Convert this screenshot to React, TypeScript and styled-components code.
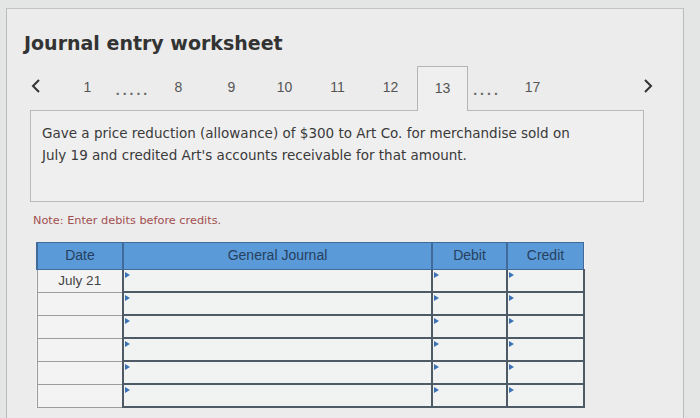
import React from 'react';
import styled, { createGlobalStyle } from 'styled-components';

const GlobalStyle = createGlobalStyle`
  html, body {
    margin: 0;
    padding: 0;
    background: #e4e5e5;
  }
  body {
    width: 700px;
    height: 418px;
    overflow: hidden;
  }
`;

const Page = styled.div`
  margin: 8px 0 0 6px;
  width: 678px;
  height: 410px;
  box-sizing: border-box;
  background: #ececec;
  border-top: 1px solid #c2c3c3;
  border-left: 1px solid #b9baba;
  border-right: 1px solid #b9baba;
`;

const Title = styled.h1`
  margin: 0;
  padding: 22px 0 0 17px;
  font-family: 'DejaVu Sans', Verdana, sans-serif;
  font-weight: bold;
  font-size: 19px;
  line-height: 24px;
  color: #333;
`;

const Body = styled.div`
  padding: 0 0 0 23px;
`;

const TabRow = styled.div`
  display: flex;
  align-items: stretch;
  height: 44px;
  margin-top: 11px;
  width: 614px;
`;

const Arrow = styled.div<{ right?: boolean }>`
  flex-shrink: 0;
  display: flex;
  align-items: center;
  width: ${(p) => (p.right ? 'auto' : '31px')};
  padding-bottom: 4px;
  box-sizing: border-box;
  margin-left: ${(p) => (p.right ? 'auto' : '0')};
  margin-right: ${(p) => (p.right ? '-10px' : '0')};
`;

const Tab = styled.div<{ active?: boolean }>`
  flex-shrink: 0;
  width: ${(p) => (p.active ? '51px' : '53px')};
  box-sizing: border-box;
  display: flex;
  align-items: center;
  justify-content: center;
  padding-bottom: 2px;
  font-family: 'Liberation Sans', Arial, sans-serif;
  font-size: 14px;
  color: #555;
  background: ${(p) => (p.active ? '#efefef' : 'transparent')};
  border: ${(p) => (p.active ? '1px solid #b5b5b5' : 'none')};
  border-bottom: none;
  margin-bottom: ${(p) => (p.active ? '-1px' : '0')};
  position: relative;
  z-index: 1;
`;

const Dots = styled.div<{ w: number }>`
  flex-shrink: 0;
  width: ${(p) => p.w}px;
  display: flex;
  align-items: center;
  justify-content: center;
  font-family: 'Liberation Sans', Arial, sans-serif;
  font-size: 14px;
  font-weight: bold;
  letter-spacing: 3px;
  color: #666;
  padding-top: 4px;
`;

const Question = styled.div`
  width: 614px;
  height: 92px;
  box-sizing: border-box;
  border: 1px solid #b9b9b9;
  background: #efefef;
  padding: 11px 8px 0 11px;
  font-family: 'DejaVu Sans', Verdana, sans-serif;
  font-size: 13.5px;
  line-height: 22px;
  color: #3a3a3a;
  white-space: nowrap;
`;

const Note = styled.div`
  margin: 12px 0 0 3px;
  font-family: 'DejaVu Sans', Verdana, sans-serif;
  font-size: 11.3px;
  color: #a24f4f;
`;

const Table = styled.table`
  margin: 15px 0 0 6px;
  border-collapse: collapse;
  table-layout: fixed;
  width: 539px;
  background: #f1f1f1;
`;

const HeadCell = styled.th<{ w: number }>`
  width: ${(p) => p.w}px;
  height: 24px;
  padding: 0 0 2px;
  background: #5a9ad8;
  border: 1px solid #41699a;
  border-left-width: 2px;
  font-family: 'Liberation Sans', Arial, sans-serif;
  font-weight: normal;
  font-size: 14px;
  color: #26415e;
  text-align: center;
  vertical-align: middle;
`;

const DateCell = styled.td`
  height: 21px;
  padding: 0;
  border: 1px solid #9a9c9e;
  font-family: 'Liberation Sans', Arial, sans-serif;
  font-size: 13.5px;
  color: #444;
  text-align: center;
  vertical-align: middle;
  background: #f3f3f3;
`;

const InputCell = styled.td`
  height: 21px;
  padding: 0;
  border: 2px solid #4e5a66;
  border-top-width: 1px;
  position: relative;
  background: #f1f2f2;
`;

// small blue dropdown marker on each entry cell
const Marker = styled.span`
  position: absolute;
  left: 1px;
  top: 2px;
  width: 0;
  height: 0;
  border-top: 3px solid transparent;
  border-bottom: 3px solid transparent;
  border-left: 5px solid #3c72b4;
`;

const Chevron = ({ dir }: { dir: 'left' | 'right' }) => (
  <svg width="11" height="16" viewBox="0 0 11 16">
    <path
      d={dir === 'left' ? 'M9 2 L3 8 L9 14' : 'M2 2 L8 8 L2 14'}
      fill="none"
      stroke="#333"
      strokeWidth="2"
    />
  </svg>
);

const rows = ['July 21', '', '', '', '', ''];

export default function App() {
  return (
    <>
      <GlobalStyle />
      <Page>
        <Title>Journal entry worksheet</Title>
        <Body>
          <TabRow>
            <Arrow>
              <Chevron dir="left" />
            </Arrow>
            <Tab>1</Tab>
            <Dots w={38}>.....</Dots>
            <Tab>8</Tab>
            <Tab>9</Tab>
            <Tab>10</Tab>
            <Tab>11</Tab>
            <Tab>12</Tab>
            <Tab active>13</Tab>
            <Dots w={38}>....</Dots>
            <Tab>17</Tab>
            <Arrow right>
              <Chevron dir="right" />
            </Arrow>
          </TabRow>
          <Question>
            Gave a price reduction (allowance) of $300 to Art Co. for merchandise sold on
            <br />
            July 19 and credited Art's accounts receivable for that amount.
          </Question>
          <Note>Note: Enter debits before credits.</Note>
          <Table>
            <thead>
              <tr>
                <HeadCell w={84}>Date</HeadCell>
                <HeadCell w={307}>General Journal</HeadCell>
                <HeadCell w={73}>Debit</HeadCell>
                <HeadCell w={75}>Credit</HeadCell>
              </tr>
            </thead>
            <tbody>
              {rows.map((d, i) => (
                <tr key={i}>
                  <DateCell>{d}</DateCell>
                  <InputCell>
                    <Marker />
                  </InputCell>
                  <InputCell>
                    <Marker />
                  </InputCell>
                  <InputCell>
                    <Marker />
                  </InputCell>
                </tr>
              ))}
            </tbody>
          </Table>
        </Body>
      </Page>
    </>
  );
}
